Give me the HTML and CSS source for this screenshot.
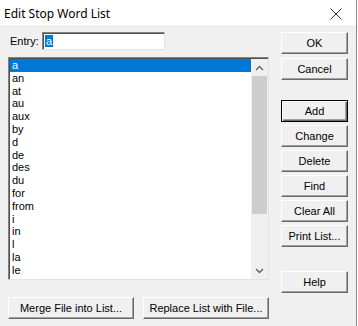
FILE: index.html
```html
<!DOCTYPE html>
<html>
<head>
<meta charset="utf-8">
<link rel="stylesheet" href="styles.css">
</head>
<body>
<div class="window">
  <div class="titlebar">
    <span class="title">Edit Stop Word List</span>
    <svg class="close" width="12" height="12" viewBox="0 0 12 12"><path d="M0.5 0.5 L11.5 11.5 M11.5 0.5 L0.5 11.5" stroke="#333" stroke-width="1" fill="none"/></svg>
  </div>
  <div class="client">
    <div class="leftcol">
      <div class="entryrow">
        <span class="label">Entry:</span>
        <div class="input"><span class="sel">a</span></div>
      </div>
      <div class="listbox">
        <div class="items">
          <div class="item selected">a</div>
          <div class="item">an</div>
          <div class="item">at</div>
          <div class="item">au</div>
          <div class="item">aux</div>
          <div class="item">by</div>
          <div class="item">d</div>
          <div class="item">de</div>
          <div class="item">des</div>
          <div class="item">du</div>
          <div class="item">for</div>
          <div class="item">from</div>
          <div class="item">i</div>
          <div class="item">in</div>
          <div class="item">l</div>
          <div class="item">la</div>
          <div class="item">le</div>
        </div>
        <div class="scrollbar">
          <div class="arrow"><svg width="9" height="6" viewBox="0 0 9 6"><path d="M1 5 L4.5 1.5 L8 5" stroke="#606060" stroke-width="1.4" fill="none"/></svg></div>
          <div class="track"><div class="thumb"></div></div>
          <div class="arrow"><svg width="9" height="6" viewBox="0 0 9 6"><path d="M1 1 L4.5 4.5 L8 1" stroke="#606060" stroke-width="1.4" fill="none"/></svg></div>
        </div>
      </div>
      <div class="bottomrow">
        <button class="btn merge">Merge File into List...</button>
        <button class="btn replace">Replace List with File...</button>
      </div>
    </div>
    <div class="rightcol">
      <button class="btn side">OK</button>
      <button class="btn side">Cancel</button>
      <div class="group">
        <button class="btn side default">Add</button>
        <button class="btn side">Change</button>
        <button class="btn side">Delete</button>
        <button class="btn side">Find</button>
        <button class="btn side">Clear All</button>
        <button class="btn side">Print List...</button>
      </div>
      <button class="btn side help">Help</button>
    </div>
  </div>
</div>
</body>
</html>
```

FILE: styles.css
```css
html, body {
  margin: 0;
  padding: 0;
  background: #ffffff;
}
body {
  width: 358px;
  height: 326px;
  overflow: hidden;
  font-family: "Liberation Sans", Arial, sans-serif;
  font-size: 11px;
  color: #000;
}
.window {
  width: 356px;
  height: 326px;
  border-right: 1px solid #8a8a8a;
  display: flex;
  flex-direction: column;
  background: #f0f0f0;
}
.titlebar {
  height: 25px;
  background: #ffffff;
  display: flex;
  align-items: center;
  justify-content: space-between;
  padding: 0 14px 0 4px;
  flex: none;
}
.title {
  font-family: "Noto Sans", "Open Sans", sans-serif;
  font-size: 12px;
  color: #000;
  margin-top: 1px;
}
.close {
  display: block;
  margin-top: 2px;
}
.client {
  flex: 1;
  display: flex;
  padding: 7px 0 0 8px;
}
.leftcol {
  width: 261px;
  display: flex;
  flex-direction: column;
}
.entryrow {
  height: 18px;
  display: flex;
  align-items: center;
}
.label {
  padding-left: 2px;
  width: 32px;
}
.input {
  width: 119px;
  height: 16px;
  background: #fff;
  border-top: 1px solid #828282;
  border-left: 1px solid #828282;
  border-right: 1px solid #e3e3e3;
  border-bottom: 1px solid #e3e3e3;
  box-shadow: inset 1px 1px 0 #505050;
  display: flex;
  align-items: center;
  padding-left: 2px;
  box-sizing: content-box;
}
.sel {
  background: #0078d7;
  color: #fff;
  padding: 0 1px;
  line-height: 12px;
}
.listbox {
  margin-top: 7px;
  height: 223px;
  box-sizing: border-box;
  display: flex;
  background: #fff;
  border-top: 1px solid #828282;
  border-left: 1px solid #828282;
  border-right: 1px solid #e3e3e3;
  border-bottom: 1px solid #e3e3e3;
  box-shadow: inset 1px 1px 0 #505050;
  padding: 1px 0 0 1px;
}
.items {
  flex: 1;
  overflow: hidden;
}
.item {
  height: 12.8px;
  line-height: 12.8px;
  padding-left: 2px;
  white-space: nowrap;
}
.item.selected {
  background: #0078d7;
  color: #fff;
}
.scrollbar {
  width: 17px;
  display: flex;
  flex-direction: column;
  background: #f0f0f0;
}
.arrow {
  height: 17px;
  display: flex;
  align-items: center;
  justify-content: center;
  flex: none;
}
.track {
  flex: 1;
  display: flex;
  flex-direction: column;
  padding: 0 1px;
}
.thumb {
  margin-top: 0;
  height: 138px;
  background: #cdcdcd;
}
.bottomrow {
  margin-top: 17px;
  display: flex;
  gap: 9px;
}
.btn {
  font-family: "Liberation Sans", Arial, sans-serif;
  font-size: 11px;
  color: #000;
  background: #f0f0f0;
  height: 22px;
  padding: 0;
  margin: 0;
  box-sizing: border-box;
  border-top: 1px solid #ffffff;
  border-left: 1px solid #ffffff;
  border-right: 1px solid #696969;
  border-bottom: 1px solid #696969;
  box-shadow: inset -1px -1px 0 #a0a0a0;
  border-radius: 0;
}
.merge {
  width: 127px;
}
.replace {
  width: 127px;
}
.rightcol {
  margin-left: 12px;
  width: 67px;
  display: flex;
  flex-direction: column;
}
.side {
  width: 67px;
  flex: none;
}
.side + .side {
  margin-top: 4px;
}
.group {
  margin-top: 20px;
  display: flex;
  flex-direction: column;
  gap: 3px;
}
.group .side + .side {
  margin-top: 0;
}
.default {
  border: 1px solid #000;
  box-shadow: inset 1px 1px 0 #fff, inset -1px -1px 0 #696969, inset -2px -2px 0 #a0a0a0;
}
.help {
  margin-top: 24px;
}
```
